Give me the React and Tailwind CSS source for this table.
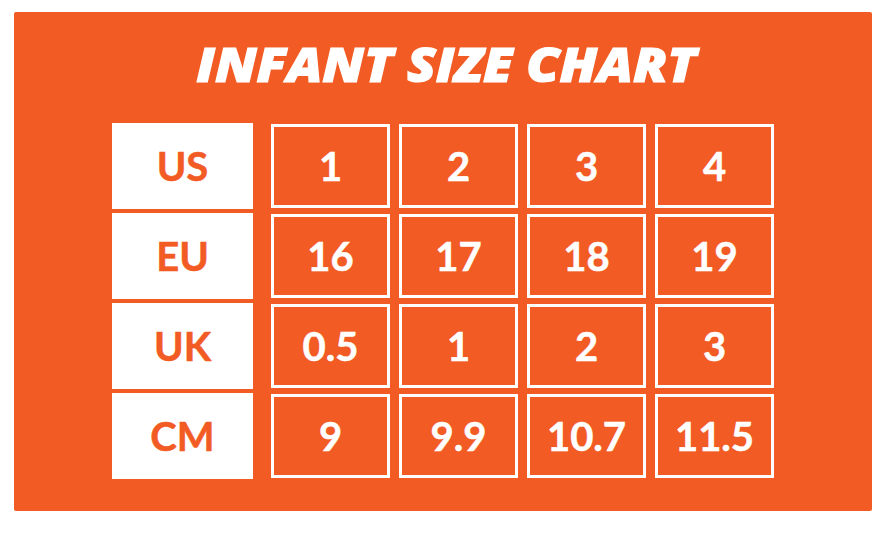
import React from 'react';

const rows = [
    { label: 'US', values: ['1', '2', '3', '4'] },
    { label: 'EU', values: ['16', '17', '18', '19'] },
    { label: 'UK', values: ['0.5', '1', '2', '3'] },
    { label: 'CM', values: ['9', '9.9', '10.7', '11.5'] },
];

function App() {
    return (
        <div className="w-[896px] h-[538px] bg-white pt-[12px] pl-[14px] font-['Lato','Open_Sans',sans-serif]">
            <div className="w-[858px] h-[499px] bg-[#f25b23] rounded-[2px] flex flex-col items-center pt-[28px]">
                {/* Title */}
                <h1 className="font-['Open_Sans',sans-serif] text-[48px] leading-[48px] font-extrabold italic text-white tracking-[0px] scale-x-[1.1] mb-[35px] ml-[6px] [-webkit-text-stroke:1.2px_white]">
                    INFANT SIZE CHART
                </h1>

                {/* Size grid */}
                <div className="flex flex-col gap-[4px]">
                    {rows.map((row) => (
                        <div key={row.label} className="flex h-[86px]">
                            <div className="w-[141px] h-full bg-white flex items-center justify-center text-[40px] font-bold text-[#f25b23] [-webkit-text-stroke:0.5px_#f25b23]">
                                {row.label}
                            </div>
                            <div className="flex gap-[9px] ml-[18px] py-[1px]">
                                {row.values.map((v, i) => (
                                    <div
                                        key={i}
                                        className="w-[119px] h-full border-[3px] border-white flex items-center justify-center text-[40px] font-bold text-white [-webkit-text-stroke:0.5px_white]"
                                    >
                                        {v}
                                    </div>
                                ))}
                            </div>
                        </div>
                    ))}
                </div>
            </div>
        </div>
    );
}

export default App;
